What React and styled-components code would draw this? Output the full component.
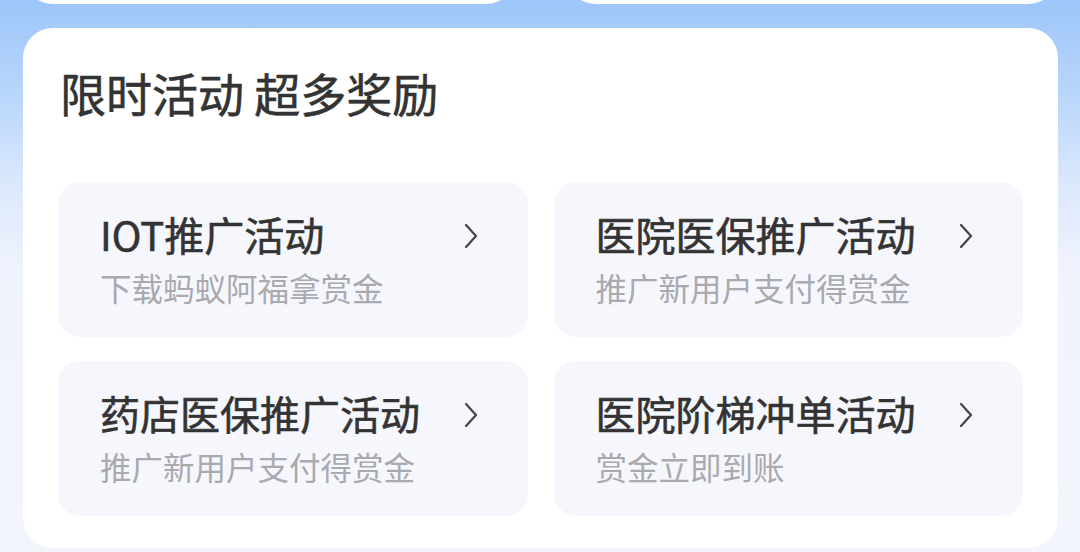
import React from 'react'
import styled, { createGlobalStyle } from 'styled-components'

const GlobalStyle = createGlobalStyle`
	html, body {
		margin: 0;
		padding: 0;
	}
	body {
		font-family: "Noto Sans CJK SC", "Noto Sans", sans-serif;
		background: #f3f5fc;
	}
`

const Page = styled.div`
	width: 1080px;
	height: 552px;
	overflow: hidden;
	box-sizing: border-box;
	padding: 0 22px 0 23px;
	background: linear-gradient(180deg, #9dc6fa 0px, #b7d5fb 90px, #dde9fc 190px, #eff3fd 270px, #f3f5fc 100%);
	display: flex;
	flex-direction: column;
	gap: 24px;
`

const TopRow = styled.div`
	display: flex;
	gap: 50px;
	margin-top: -60px;
`

const TopCard = styled.div`
	flex: 1;
	height: 64px;
	background: #ffffff;
	border-radius: 30px;
`

const Panel = styled.div`
	background: #ffffff;
	border-radius: 30px;
	padding: 34px 35px 32px 35px;
	display: flex;
	flex-direction: column;
`

const Heading = styled.h2`
	margin: 0 0 0 2px;
	font-size: 46px;
	line-height: 60px;
	font-weight: 400;
	color: #333333;
	-webkit-text-stroke: 0.6px #333333;
`

const Grid = styled.div`
	margin-top: 60px;
	display: grid;
	grid-template-columns: 1fr 1fr;
	column-gap: 26px;
	row-gap: 24px;
`

const Item = styled.div`
	background: #f6f7fd;
	border-radius: 22px;
	height: 155px;
	box-sizing: border-box;
	padding: 28px 50px 0 42px;
	display: flex;
	align-items: flex-start;
	justify-content: space-between;
	cursor: pointer;
`

const Texts = styled.div`
	display: flex;
	flex-direction: column;
	gap: 9px;
`

const ItemTitle = styled.div`
	font-size: 40px;
	line-height: 48px;
	font-weight: 400;
	color: #333333;
	-webkit-text-stroke: 0.6px #333333;
	white-space: nowrap;
`

const ItemSub = styled.div`
	font-size: 31.5px;
	line-height: 40px;
	color: #a9a9ae;
	white-space: nowrap;
`

const Chevron = styled.svg`
	width: 14px;
	height: 26px;
	margin-top: 13px;
	flex-shrink: 0;
`

const activities = [
	{ title: 'IOT推广活动', sub: '下载蚂蚁阿福拿赏金' },
	{ title: '医院医保推广活动', sub: '推广新用户支付得赏金' },
	{ title: '药店医保推广活动', sub: '推广新用户支付得赏金' },
	{ title: '医院阶梯冲单活动', sub: '赏金立即到账' }
]

const App = () => (
	<>
		<GlobalStyle />
		<Page>
			<TopRow>
				<TopCard />
				<TopCard />
			</TopRow>
			<Panel>
				<Heading>限时活动 超多奖励</Heading>
				<Grid>
					{activities.map((a, i) => (
						<Item key={i}>
							<Texts>
								<ItemTitle>{a.title}</ItemTitle>
								<ItemSub>{a.sub}</ItemSub>
							</Texts>
							<Chevron viewBox="0 0 14 26" fill="none">
								<path
									d="M2 2 L12 13 L2 24"
									stroke="#47474b"
									strokeWidth="2.3"
									strokeLinecap="round"
									strokeLinejoin="round"
								/>
							</Chevron>
						</Item>
					))}
				</Grid>
			</Panel>
		</Page>
	</>
)

export default App
